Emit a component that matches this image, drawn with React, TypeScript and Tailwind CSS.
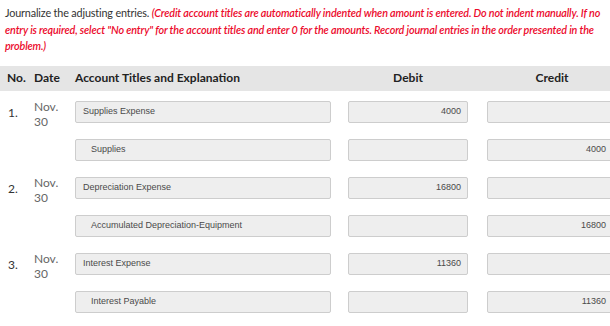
import React from 'react';

type Line = {
  no?: string;
  date?: boolean;
  title: string;
  debit?: string;
  credit?: string;
};

const lines: Line[] = [
  { no: '1.', date: true, title: 'Supplies Expense', debit: '4000' },
  { title: 'Supplies', credit: '4000' },
  { no: '2.', date: true, title: 'Depreciation Expense', debit: '16800' },
  { title: 'Accumulated Depreciation-Equipment', credit: '16800' },
  { no: '3.', date: true, title: 'Interest Expense', debit: '11360' },
  { title: 'Interest Payable', credit: '11360' },
];

function Box({ value, width, right, indent }: { value?: string; width: string; right?: boolean; indent?: boolean }) {
  return (
    <div
      className={`${width} h-[22px] shrink-0 flex items-center rounded-[2px] border border-[#cdcdcd] bg-[#eeeeee] text-[9px] text-[#4a4a4a] ${
        right ? 'justify-end pr-[6px]' : indent ? 'pl-[15px]' : 'pl-[7px]'
      }`}
      style={{ fontFamily: '"Liberation Sans", Arial, sans-serif' }}
    >
      {value}
    </div>
  );
}

export default function App() {
  return (
    <div
      className="w-[610px] h-[326px] overflow-hidden bg-white text-[#333]"
      style={{ fontFamily: 'Lato, "Open Sans", sans-serif' }}
    >
      {/* Instructions */}
      <p className="pl-[5px] pr-0 pt-[5px] text-[10.8px] leading-[16.5px] tracking-[-0.15px]">
        Journalize the adjusting entries.{' '}
        <span className="italic font-semibold text-[#ec0a2c]">
          (Credit account titles are automatically indented when amount is entered. Do not indent manually. If no
          entry is required, select "No entry" for the account titles and enter 0 for the amounts. Record journal
          entries in the order presented in the problem.)
        </span>
      </p>

      {/* Header */}
      <div className="mt-[11px] h-[25px] flex items-center bg-[#e5e5e5] text-[12px] font-bold text-[#222]">
        <div className="w-[34px] shrink-0 pl-[7px]">No.</div>
        <div className="w-[41px] shrink-0">Date</div>
        <div className="w-[273px] shrink-0">Account Titles and Explanation</div>
        <div className="w-[120px] shrink-0 text-center">Debit</div>
        <div className="w-[19px] shrink-0" />
        <div className="w-[130px] shrink-0 text-center">Credit</div>
      </div>

      {/* Rows */}
      <div className="flex flex-col gap-[16px] pt-[10px]">
        {lines.map((l, i) => (
          <div key={i} className="flex items-center h-[22px]">
            <div className="w-[34px] shrink-0 pl-[8px] pt-[2px] text-[12px] text-[#333]">{l.no}</div>
            <div className="w-[41px] shrink-0 text-[12px] leading-[15px] text-[#666] pt-[4px]">
              {l.date && (
                <>
                  <div>Nov.</div>
                  <div>30</div>
                </>
              )}
            </div>
            <Box value={l.title} width="w-[256px]" indent={!!l.credit} />
            <div className="w-[17px] shrink-0" />
            <Box value={l.debit} width="w-[120px]" right />
            <div className="w-[19px] shrink-0" />
            <Box value={l.credit} width="w-[126px]" right />
          </div>
        ))}
      </div>
    </div>
  );
}
